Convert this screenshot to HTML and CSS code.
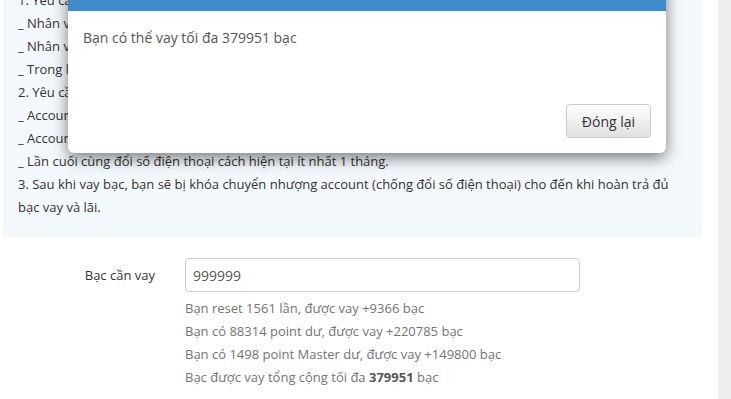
FILE: index.html
```html
<!DOCTYPE html>
<html lang="vi">
<head>
<meta charset="utf-8">
<title>Vay bạc</title>
<link rel="stylesheet" href="styles.css">
</head>
<body>
<div class="page">
  <main class="main">
    <div class="panel">
      <p>1. Yêu cầu nhân vật:</p>
      <p>_ Nhân vật đã reset ít nhất 100 lần.</p>
      <p>_ Nhân vật không bị khóa.</p>
      <p>_ Trong lúc vay không được đổi tên.</p>
      <p>2. Yêu cầu account:</p>
      <p>_ Account đã đăng ký số điện thoại.</p>
      <p>_ Account không có khoản vay chưa trả.</p>
      <p>_ Lần cuối cùng đổi số điện thoại cách hiện tại ít nhất 1 tháng.</p>
      <p>3. Sau khi vay bạc, bạn sẽ bị khóa chuyển nhượng account (chống đổi số điện thoại) cho đến khi hoàn trả đủ bạc vay và lãi.</p>
    </div>
    <form class="form-row">
      <label class="form-label" for="amount">Bạc cần vay</label>
      <div class="form-field">
        <input id="amount" class="input" type="text" value="999999">
        <div class="help">
          <p>Bạn reset 1561 lần, được vay +9366 bạc</p>
          <p>Bạn có 88314 point dư, được vay +220785 bạc</p>
          <p>Bạn có 1498 point Master dư, được vay +149800 bạc</p>
          <p>Bạc được vay tổng cộng tối đa <b>379951</b> bạc</p>
        </div>
      </div>
    </form>
  </main>
  <aside class="side"></aside>
</div>

<div class="modal">
  <div class="modal-header"></div>
  <div class="modal-body">Bạn có thể vay tối đa 379951 bạc</div>
  <div class="modal-footer">
    <button class="btn" type="button">Đóng lại</button>
  </div>
</div>
</body>
</html>
```

FILE: styles.css
```css
* { box-sizing: border-box; }
html, body { margin: 0; padding: 0; }
body {
  font-family: "Open Sans", "Noto Sans", sans-serif;
  font-size: 13px;
  color: #333;
  background: #fff;
  height: 399px;
  overflow: hidden;
}
p { margin: 0; }

.page {
  display: flex;
  min-height: 399px;
}
.main {
  flex: 1;
  padding: 0 16px 0 3px;
}
.side {
  width: 13px;
  background: #efefef;
}

.panel {
  margin-top: -29px;
  background: #f3f8fc;
  border-radius: 4px;
  padding: 18px 15px 18px 15px;
  line-height: 23px;
  color: #333;
}

.form-row {
  display: grid;
  grid-template-columns: 152px 395px;
  column-gap: 30px;
  margin-top: 21px;
}
.form-label {
  text-align: right;
  line-height: 34px;
  color: #333;
}
.input {
  display: block;
  width: 395px;
  height: 34px;
  border: 1px solid #ccc;
  border-radius: 4px;
  padding: 0 7px;
  font-family: inherit;
  font-size: 14px;
  color: #555;
  background: #fff;
}
.help {
  margin-top: 5px;
  line-height: 23px;
  color: #737373;
}
.help b { color: #555; }

.modal {
  position: absolute;
  left: 68px;
  top: -40px;
  width: 598px;
  background: #fff;
  border-radius: 6px;
  box-shadow: 0 5px 15px rgba(0,0,0,.5);
  overflow: hidden;
}
.modal-header {
  height: 51px;
  background: #428bca;
}
.modal-body {
  padding: 15px 15px 15px 15px;
  font-size: 14px;
  line-height: 23px;
  color: #555;
}
.modal-footer {
  display: flex;
  justify-content: flex-end;
  padding: 40px 15px 15px;
}
.btn {
  height: 34px;
  width: 85px;
  border: 1px solid #ccc;
  border-radius: 4px;
  background: linear-gradient(#fff, #e0e0e0);
  font-family: inherit;
  font-size: 14px;
  color: #333;
  padding: 0;
}
```
